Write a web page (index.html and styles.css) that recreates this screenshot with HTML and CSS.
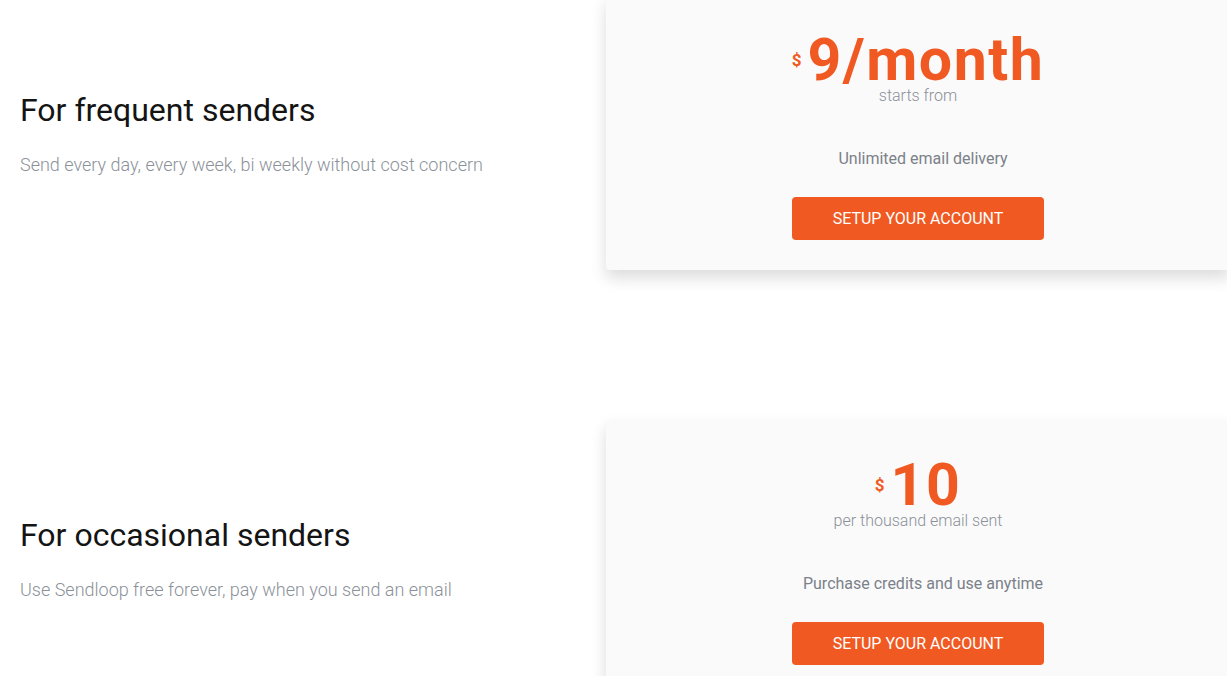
FILE: index.html
```html
<!DOCTYPE html>
<html lang="en">
<head>
    <meta charset="UTF-8">
    <meta name="viewport" content="width=device-width, initial-scale=1.0">
    <title>Pricing</title>
    <link rel="stylesheet" href="styles.css">
</head>
<body>

    <div class="pricing">

        <div class="plan-row">
            <div class="plan-info">
                <h2>For frequent senders</h2>
                <p>Send every day, every week, bi weekly without cost concern</p>
            </div>
            <div class="plan-card">
                <div class="price">
                    <span class="currency">$</span>
                    <span class="amount">9/month</span>
                </div>
                <div class="price-note">starts from</div>
                <div class="feature">Unlimited email delivery</div>
                <a href="#" class="btn-setup">SETUP YOUR ACCOUNT</a>
            </div>
        </div>

        <div class="plan-row">
            <div class="plan-info">
                <h2>For occasional senders</h2>
                <p>Use Sendloop free forever, pay when you send an email</p>
            </div>
            <div class="plan-card">
                <div class="price">
                    <span class="currency">$</span>
                    <span class="amount">10</span>
                </div>
                <div class="price-note">per thousand email sent</div>
                <div class="feature">Purchase credits and use anytime</div>
                <a href="#" class="btn-setup">SETUP YOUR ACCOUNT</a>
            </div>
        </div>

    </div>

</body>
</html>
```

FILE: styles.css
```css
html, body {
    margin: 0;
    padding: 0;
    overflow: hidden;
}
body {
    font-family: 'Roboto', 'Liberation Sans', sans-serif;
    background-color: #fff;
    color: #111;
}
.pricing {
    margin-top: -5px;
    width: 1230px;
}
.plan-row {
    display: flex;
    align-items: center;
    margin-bottom: 150px;
}
.plan-info {
    width: 606px;
    flex-shrink: 0;
    padding: 3px 0 0 20px;
    box-sizing: border-box;
}
.plan-info h2 {
    font-size: 32px;
    font-weight: 400;
    line-height: 40px;
    color: #141414;
    margin: 0 0 22px;
}
.plan-info p {
    font-size: 18px;
    font-weight: 300;
    line-height: 26px;
    color: #8b9199;
    margin: 0;
}
.plan-card {
    width: 624px;
    height: 275px;
    flex-shrink: 0;
    box-sizing: border-box;
    padding-top: 35px;
    background-color: #fafafa;
    border-radius: 4px;
    box-shadow: 0 8px 16px rgba(0, 0, 0, 0.14);
    text-align: center;
}
.price {
    display: flex;
    justify-content: center;
    align-items: flex-start;
    color: #f05a22;
    height: 59px;
}
.currency {
    font-size: 17px;
    font-weight: 700;
    line-height: 17px;
    margin-top: 22px;
    margin-right: 6px;
}
.amount {
    font-size: 59px;
    font-weight: 700;
    line-height: 59px;
    letter-spacing: 1.5px;
}
.price-note {
    font-size: 16px;
    font-weight: 300;
    line-height: 16px;
    color: #8a9099;
    margin-top: -1px;
}
.feature {
    font-size: 16px;
    font-weight: 400;
    line-height: 20px;
    color: #7b8189;
    margin-top: 45px;
    padding-left: 10px;
}
.btn-setup {
    display: block;
    width: 252px;
    height: 43px;
    line-height: 43px;
    margin: 28px auto 0;
    background-color: #f05a22;
    color: #fff;
    border-radius: 4px;
    font-size: 16px;
    font-weight: 400;
    text-decoration: none;
}
```
